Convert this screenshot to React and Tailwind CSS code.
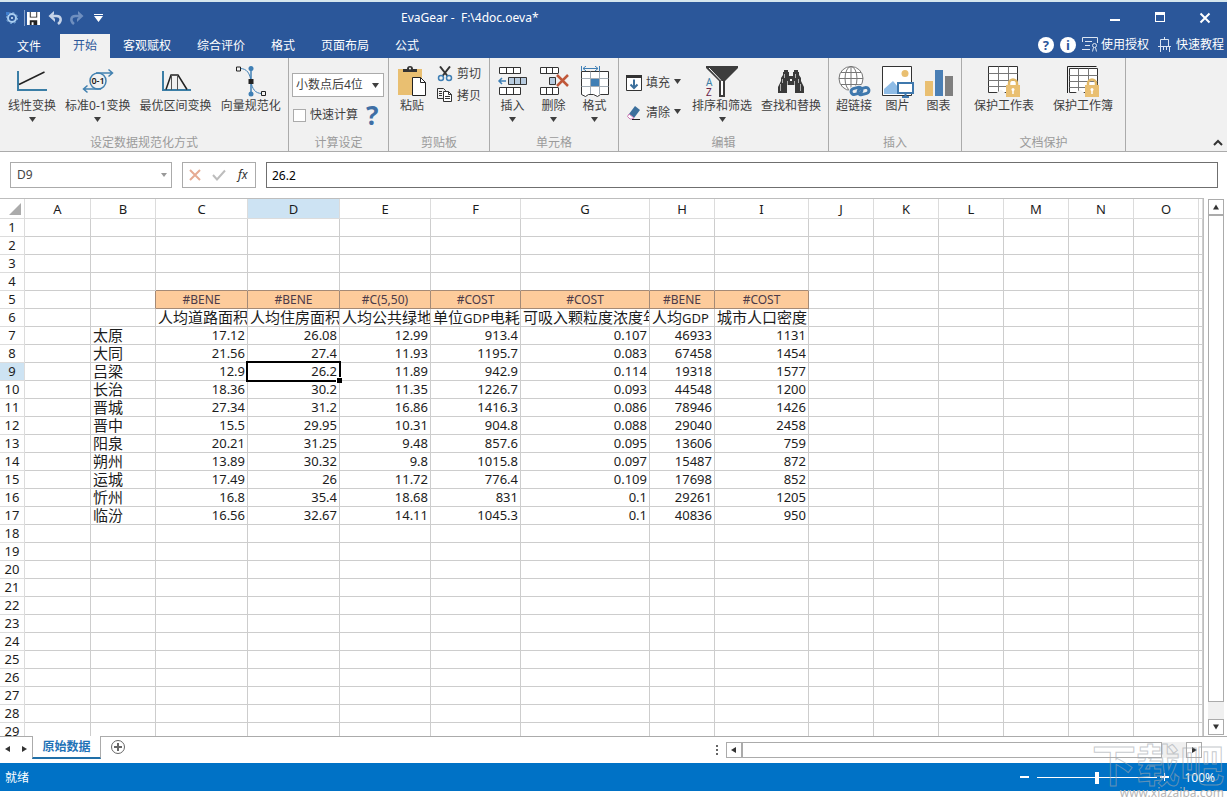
const UI_FONT = "font-['Noto_Sans','Noto_Sans_CJK_SC',sans-serif]"

const DECIMALS = ['小数点后0位', '小数点后2位', '小数点后4位', '小数点后6位']

// The last column has no width: it takes whatever space is left
const COLUMNS = [
  { id: 'A', width: 66 },
  { id: 'B', width: 65 },
  { id: 'C', width: 92 },
  { id: 'D', width: 92 },
  { id: 'E', width: 91 },
  { id: 'F', width: 90 },
  { id: 'G', width: 129 },
  { id: 'H', width: 65 },
  { id: 'I', width: 94 },
  { id: 'J', width: 65 },
  { id: 'K', width: 65 },
  { id: 'L', width: 65 },
  { id: 'M', width: 65 },
  { id: 'N', width: 65 },
  { id: 'O', width: 65 },
  { id: '' }
]

const ROW_COUNT = 29
const ACTIVE = { col: 'D', row: 9 }

const TYPES = ['#BENE', '#BENE', '#C(5,50)', '#COST', '#COST', '#BENE', '#COST']
const LABELS = ['人均道路面积', '人均住房面积', '人均公共绿地', '单位GDP电耗', '可吸入颗粒度浓度年均值', '人均GDP', '城市人口密度']

const CITIES = [
  ['太原', '17.12', '26.08', '12.99', '913.4', '0.107', '46933', '1131'],
  ['大同', '21.56', '27.4', '11.93', '1195.7', '0.083', '67458', '1454'],
  ['吕梁', '12.9', '26.2', '11.89', '942.9', '0.114', '19318', '1577'],
  ['长治', '18.36', '30.2', '11.35', '1226.7', '0.093', '44548', '1200'],
  ['晋城', '27.34', '31.2', '16.86', '1416.3', '0.086', '78946', '1426'],
  ['晋中', '15.5', '29.95', '10.31', '904.8', '0.088', '29040', '2458'],
  ['阳泉', '20.21', '31.25', '9.48', '857.6', '0.095', '13606', '759'],
  ['朔州', '13.89', '30.32', '9.8', '1015.8', '0.097', '15487', '872'],
  ['运城', '17.49', '26', '11.72', '776.4', '0.109', '17698', '852'],
  ['忻州', '16.8', '35.4', '18.68', '831', '0.1', '29261', '1205'],
  ['临汾', '16.56', '32.67', '14.11', '1045.3', '0.1', '40836', '950']
]

// Returns { kind, text } for a cell, or null when it is empty
function getCell(row, colIndex) {
  if (row === 5 && colIndex >= 2 && colIndex <= 8) return { kind: 'type', text: TYPES[colIndex - 2] }
  if (row === 6 && colIndex >= 2 && colIndex <= 8) return { kind: 'label', text: LABELS[colIndex - 2] }
  const city = CITIES[row - 7]
  if (city && colIndex >= 1 && colIndex <= 8) {
    return { kind: colIndex === 1 ? 'label' : 'number', text: city[colIndex - 1] }
  }
  return null
}

/* ---------- icons ---------- */

function Caret({ className = '' }) {
  return (
    <svg className={className} width="7" height="5" viewBox="0 0 7 5" aria-hidden="true">
      <path d="M0 0h7L3.500 5z" fill="currentColor" />
    </svg>
  )
}

function LinearIcon() {
  return (
    <svg width="32" height="32" viewBox="0 0 32 32" fill="none">
      <path d="M2 5v19h29" stroke="#3b7ea6" strokeWidth="2" />
      <path d="M3 18.500 28.500 6" stroke="#222" strokeWidth="1.500" />
    </svg>
  )
}

function ZeroOneIcon() {
  return (
    <svg width="32" height="32" viewBox="0 0 32 32" fill="none">
      <g stroke="#4281b0" strokeWidth="1.500">
        <circle cx="16" cy="15" r="8" />
        <path d="M14 7h16M26.500 3.500l4 3.500-4 3.500M19 23H2M5.500 19.500 1.500 23l4 3.500" />
      </g>
      <text x="16" y="18" textAnchor="middle" fontSize="9" fontWeight="600" fill="#222">0-1</text>
    </svg>
  )
}

function IntervalIcon() {
  return (
    <svg width="32" height="32" viewBox="0 0 32 32" fill="none">
      <path d="M3 5v19h28" stroke="#3b7ea6" strokeWidth="2" />
      <path d="M6 23.500 11 9h7l9 14.500" stroke="#222" strokeWidth="1.500" />
      <path d="M11.500 9v15M17.500 9v15" stroke="#555" />
    </svg>
  )
}

function VectorIcon() {
  return (
    <svg width="32" height="32" viewBox="0 0 32 32" fill="none">
      <path d="M16 2v27" stroke="#3f7fb5" strokeWidth="1.500" />
      <path d="M5 2.500c7 0 10 5 11 13 1 7 4 12 11 12" stroke="#3f7fb5" />
      <circle cx="16" cy="2.500" r="2.500" fill="#3f7fb5" />
      <circle cx="16" cy="28" r="2.500" fill="#3f7fb5" />
      <path d="M13.500 13h5v5h-5z" fill="#222" />
      <path d="M1.500 1h4v4h-4zM26.500 25.500h4v4h-4z" fill="#f1f1f1" stroke="#222" />
    </svg>
  )
}

function PasteIcon() {
  return (
    <svg width="32" height="32" viewBox="0 0 32 32" fill="none">
      <path d="M2 3h24v26H2z" fill="#e9bf71" />
      <path d="M7 6V3h4a3 3 0 0 1 6 0h4v3z" fill="#333" />
      <circle cx="14" cy="2.500" r="1" fill="#fff" />
      <path d="M16.500 11.500h8l5 5v13h-13z" fill="#fff" stroke="#222" />
      <path d="M24.500 11.500v5h5" stroke="#222" />
    </svg>
  )
}

function CutIcon() {
  return (
    <svg width="16" height="16" viewBox="0 0 16 16" fill="none">
      <path d="M3 .5 10.500 10M13 .5 5.500 10" stroke="#333" strokeWidth="2" />
      <circle cx="4" cy="12" r="2.500" stroke="#3f7fb5" strokeWidth="1.500" />
      <circle cx="12" cy="12" r="2.500" stroke="#3f7fb5" strokeWidth="1.500" />
    </svg>
  )
}

function CopyIcon() {
  return (
    <svg width="16" height="16" viewBox="0 0 16 16" fill="none" stroke="#333">
      <path d="M.5.500h6l2 2v8h-8zM2 3.500h3M2 5.500h3M2 7.500h3" />
      <path d="M6.500 3.500h5l3 3v7h-8z" fill="#fff" />
      <path d="M11.500 3.500v3h3M8 8.500h5M8 10.500h5" />
    </svg>
  )
}

function InsertIcon() {
  return (
    <svg width="32" height="32" viewBox="0 0 32 32" fill="none" stroke="#333">
      <path d="M2.500 1.500h21v6h-21zM9.500 1.500v6M16.500 1.500v6M2.500 21.500h21v7h-21zM9.500 21.500v7M16.500 21.500v7" fill="#fff" />
      <path d="M11.500 11.500h18v7h-18zM17.500 11.500v7M23.500 11.500v7" fill="#b7cbdf" />
      <path d="M9 15H2M5 12l-3 3 3 3" stroke="#3f7fb5" strokeWidth="1.500" />
    </svg>
  )
}

function DeleteIcon() {
  return (
    <svg width="32" height="32" viewBox="0 0 32 32" fill="none" stroke="#333">
      <path d="M20 1.500H2.500v6H20M8.500 1.500v6M14.500 1.500v6M20.500 1.500v6M20 21.500H2.500v7H20M8.500 21.500v7M14.500 21.500v7M20.500 21.500v7" fill="#fff" />
      <path d="M11.500 11.500h6v7h-6z" fill="#b7cbdf" />
      <path d="m19 9 11 11M30 9 19 20" stroke="#c0583a" strokeWidth="2.500" />
    </svg>
  )
}

function FormatIcon() {
  return (
    <svg width="32" height="32" viewBox="0 0 32 32" fill="none">
      <path d="M2.500 5.500h27v23h-8l-3 2-4-2h-5l-3 2-4-2z" fill="#fff" stroke="#333" />
      <path d="M2.500 12.500h27M2.500 20.500h27M11.500 5.500V28M20.500 5.500V28" stroke="#a3adb6" />
      <path d="M12 13h8v7h-8z" fill="#3f7fb5" />
      <path d="M2.500 0v5M20.500 0v5M4 2.500h15M7 0 4 2.500 7 5M16 0l3 2.500L16 5" stroke="#3f7fb5" />
    </svg>
  )
}

function FillIcon() {
  return (
    <svg width="16" height="16" viewBox="0 0 16 16" fill="none">
      <path d="M.5.500h15v15H.5z" fill="#fff" stroke="#333" />
      <path d="M0 0h16v3H0z" fill="#333" />
      <path d="M8 4.500V13M4.500 9.500 8 13l3.500-3.500" stroke="#3b6f9c" strokeWidth="2" />
    </svg>
  )
}

function EraseIcon() {
  return (
    <svg width="16" height="16" viewBox="0 0 16 16" fill="none">
      <path d="m9 1 5 4-6 8-5-4z" fill="#3b6f9c" />
      <path d="m3 9 5 4-2 1H4l-2.500-2.500z" fill="#fff" stroke="#c978b4" />
      <path d="M6 14.500h8" stroke="#222" />
    </svg>
  )
}

function SortFilterIcon() {
  return (
    <svg width="34" height="32" viewBox="0 0 34 32">
      <path d="M1 0h32v2L20 15v16h-6V15L1 2z" fill="#3d3d3d" />
      <path d="M16 15h2v14h-2z" fill="#fff" />
      <path d="m4 2 12 12.500" stroke="#fff" />
      <text x="1" y="20" fontSize="10" fill="#3b7ea6">A</text>
      <text x="1" y="30" fontSize="10" fill="#6b2346">Z</text>
    </svg>
  )
}

function BinocularsIcon() {
  return (
    <svg width="32" height="32" viewBox="0 0 32 32" fill="#3a3a3a">
      <path d="M9 4h4v2h1v4h4V6h1V4h4v2h1v3l2 3v3l3 6v6h-9v-8h-8v8H3v-6l3-6v-3l2-3V6h1z" />
      <path d="M9.500 8v4M7.500 13v4M5.500 18v7M20.500 8v4M23.500 13v4M25.500 18v7M12.500 15v4M19.500 15v4" stroke="#f1f1f1" strokeWidth="1" opacity=".65" />
      <path d="M15 13h2v2h-2z" fill="#f1f1f1" />
    </svg>
  )
}

function HyperlinkIcon() {
  return (
    <svg width="34" height="32" viewBox="0 0 34 32" fill="none">
      <g stroke="#777">
        <circle cx="14" cy="12.500" r="12" fill="#fff" />
        <ellipse cx="14" cy="12.500" rx="6" ry="12" />
        <path d="M14 .5v24M2 12.500h24M4 6.500h20M4 18.500h20" />
      </g>
      <g stroke="#f1f1f1" strokeWidth="5">
        <rect x="14" y="22" width="11" height="6" rx="3" transform="rotate(-15 19 25)" />
        <rect x="21" y="22" width="11" height="6" rx="3" transform="rotate(-15 27 25)" />
      </g>
      <g stroke="#3f78ad" strokeWidth="3">
        <rect x="14" y="22" width="11" height="6" rx="3" transform="rotate(-15 19 25)" />
        <rect x="21" y="22" width="11" height="6" rx="3" transform="rotate(-15 27 25)" />
      </g>
    </svg>
  )
}

function PictureIcon() {
  return (
    <svg width="34" height="32" viewBox="0 0 34 32" fill="none">
      <path d="M1.500.500h29v29h-29z" fill="#fff" stroke="#333" />
      <circle cx="24" cy="7.500" r="3.500" fill="#e9bf71" />
      <path d="M3 28v-5l9-8 5 6v7z" fill="#8fbce6" />
      <path d="M17 17h15v10H17z" fill="#fff" stroke="#3f78ad" strokeWidth="2" />
      <path d="M21 31h7M24.500 27v4" stroke="#3f78ad" strokeWidth="2" />
    </svg>
  )
}

function ChartIcon() {
  return (
    <svg width="32" height="32" viewBox="0 0 32 32">
      <path d="M2 15h8v15H2z" fill="#e9bf71" />
      <path d="M12 4h8v26h-8z" fill="#4a7fb5" />
      <path d="M22 10h8v20h-8z" fill="#7f7f7f" />
    </svg>
  )
}

function ProtectIcon({ book }) {
  return (
    <svg width="34" height="32" viewBox="0 0 34 32" fill="none">
      {book && <path d="M1.500 27V.5h29" stroke="#222" />}
      <path d={book ? 'M3.500 2.500h28v24h-28z' : 'M1.500.500h29v26h-29z'} fill="#fff" stroke="#333" />
      <path
        d={book ? 'M3.500 9.500h28M3.500 15.500h28M3.500 21.500h28M12.500 2.500v24M22.500 2.500v24' : 'M1.500 7.500h29M1.500 14.500h29M1.500 20.500h29M11.500.500v26M21.500.500v26'}
        stroke="#777"
      />
      <path d="m9 27.500 5-4 5 4z" fill="#f1f1f1" />
      <path d="M22 20v-2.500a4 4 0 0 1 8 0V20" stroke="#e2b866" strokeWidth="2.500" />
      <path d="M19 19h14v12H19z" fill="#e9bf71" />
      <circle cx="26" cy="23.500" r="1.500" fill="#fff" />
      <path d="M26 24v4" stroke="#fff" strokeWidth="1.500" />
    </svg>
  )
}

/* ---------- title bar and tabs ---------- */

function TitleBar() {
  return (
    <header className="flex h-8 shrink-0 items-center bg-[#2b579a] text-white">
      <div className="flex w-[401px] items-center">
        <svg className="ml-[5px]" width="14" height="14" viewBox="0 0 14 14" fill="none">
          <circle cx="7" cy="7" r="4" stroke="#a9cdf0" strokeWidth="2" />
          <circle cx="7" cy="7" r="5.500" stroke="#7fb0e0" strokeDasharray="2 2.300" />
          <circle cx="7" cy="7" r="1" fill="#d9ecff" />
          <path d="M1 1h3v3H1z" fill="#3f7fd0" />
        </svg>
        <span className="ml-[5px] h-4 w-px bg-[#8aa4cb]" />
        <button type="button" aria-label="保存" className="ml-[2px]">
          <svg width="13" height="13" viewBox="0 0 14 14">
            <path d="M0 0h14v14H0z" fill="#fff" />
            <path d="M3 0h8v6H3zM3 9h8v5H3z" fill="#222" />
            <path d="M4 0h6v5H4zM5 11h2v3H5z" fill="#fff" />
          </svg>
        </button>
        <button type="button" aria-label="撤销" className="ml-2">
          <svg width="15" height="14" viewBox="0 0 15 14" fill="none">
            <path d="M3 5h5.500c5 0 5.500 5 1.500 8" stroke="#c5d3e8" strokeWidth="2.500" />
            <path d="M6 0v3L4.500 5 7 8v3L.5 5z" fill="#c5d3e8" />
          </svg>
        </button>
        <button type="button" aria-label="重做" className="ml-[6px]">
          <svg width="15" height="14" viewBox="0 0 15 14" fill="none">
            <path d="M12 5H6.500C1.500 5 1 10 5 13" stroke="#6f8fbf" strokeWidth="2.500" />
            <path d="M9 0v3l1.500 2L8 8v3l6.500-6z" fill="#6f8fbf" />
          </svg>
        </button>
        <button type="button" aria-label="自定义" className="ml-[10px]">
          <svg width="9" height="9" viewBox="0 0 9 9" fill="#fff">
            <path d="M0 0h9v1H0zM0 2h9L4.500 8z" />
          </svg>
        </button>
      </div>
      <h1 className="whitespace-pre text-[12px]">EvaGear -  F:\4doc.oeva*</h1>
      <div className="ml-auto flex items-center pr-4">
        <button type="button" aria-label="最小化">
          <svg width="12" height="12" viewBox="0 0 12 12"><path d="M1 7h10v2H1z" fill="#fff" /></svg>
        </button>
        <button type="button" aria-label="最大化" className="ml-[33px]">
          <svg width="12" height="12" viewBox="0 0 12 12" fill="#fff" fillRule="evenodd"><path d="M1 0h10v10H1zM2 3v6h8V3z" /></svg>
        </button>
        <button type="button" aria-label="关闭" className="ml-[33px]">
          <svg width="12" height="12" viewBox="0 0 12 12"><path d="m1.500 1.500 9 9M10.500 1.500l-9 9" stroke="#fff" strokeWidth="2" /></svg>
        </button>
      </div>
    </header>
  )
}

function TabBar() {
  const tabs = ['开始', '客观赋权', '综合评价', '格式', '页面布局', '公式']
  return (
    <nav className="flex h-6 shrink-0 bg-[#2b579a] text-[12px] text-white">
      <button type="button" className="w-[60px] pr-[2px] pt-px">文件</button>
      {tabs.map((tab, i) => (
        <button key={tab} type="button" className={i === 0 ? 'bg-[#f1f1f1] px-[13px] text-[#2b579a]' : 'px-[13px]'}>
          {tab}
        </button>
      ))}
      <div className="ml-auto flex items-center gap-[6px] pr-[3px] pb-[2px]">
        <button type="button" aria-label="帮助" className="size-4 rounded-full bg-white text-center text-[13px] leading-4 font-bold text-[#2b579a]">?</button>
        <button type="button" aria-label="关于" className="size-4 rounded-full bg-white text-center text-[13px] leading-4 font-bold text-[#2b579a]">i</button>
        <button type="button" className="flex items-center gap-[3px]">
          <svg width="16" height="16" viewBox="0 0 16 16" fill="none" stroke="#dbe5f3">
            <path d="M8 12.500H0M.5.500h15V6M.5.500V5M3 4.500h7M3 8.500h5" />
            <circle cx="12.500" cy="8.500" r="2" />
            <path d="m11.500 10.500-1 4M13.500 10.500l1 4" />
          </svg>
          使用授权
        </button>
        <button type="button" className="ml-[2px] flex items-center gap-[3px]">
          <svg width="16" height="16" viewBox="0 0 16 16" fill="none" stroke="#dbe5f3">
            <path d="M7.500 0v3M3.500 9.500v-7h8v7M1 9.500h13M3.500 10v5M6.500 10v3M9.500 10v3M12.500 10v5" />
          </svg>
          快速教程
        </button>
      </div>
    </nav>
  )
}

/* ---------- ribbon ---------- */

function RibbonGroup({ title, width, className = '', children }) {
  return (
    <section className={`flex shrink-0 flex-col border-r border-[#ababab] ${width}`}>
      <div className={`flex flex-1 items-start pt-2 ${className}`}>{children}</div>
      <h2 className="text-center text-[12px] leading-4 text-[#9b9b9b]">{title}</h2>
    </section>
  )
}

function BigButton({ icon, label, menu, className = '' }) {
  return (
    <button type="button" className={`flex shrink-0 flex-col items-center whitespace-nowrap ${className}`}>
      <span className="flex h-8 justify-center">{icon}</span>
      <span className="leading-4">{label}</span>
      {menu && <Caret className="mt-[3px]" />}
    </button>
  )
}

function SmallButton({ icon, label, menu }) {
  return (
    <button type="button" className="flex items-center gap-1 leading-4 whitespace-nowrap">
      {icon}
      {label}
      {menu && <Caret className="mb-1" />}
    </button>
  )
}

function Ribbon() {
  return (
    <div className="flex h-[94px] shrink-0 overflow-hidden border-b border-[#ababab] bg-[#f1f1f1] text-[12px] text-[#3f3f3f]">
      <RibbonGroup title="设定数据规范化方式" width="w-[289px]" className="gap-[9px] pl-2">
        <BigButton icon={<LinearIcon />} label="线性变换" menu />
        <BigButton icon={<ZeroOneIcon />} label="标准0-1变换" menu />
        <BigButton icon={<IntervalIcon />} label="最优区间变换" />
        <BigButton icon={<VectorIcon />} label="向量规范化" />
      </RibbonGroup>

      <RibbonGroup title="计算设定" width="w-[100px]" className="pl-[3px]">
        <div className="flex flex-col gap-1 pt-[7px]">
          <div className="relative">
            <select aria-label="小数位数" defaultValue="小数点后4位" className="h-6 w-[92px] appearance-none border border-[#ababab] bg-white pl-[3px]">
              {DECIMALS.map((d) => <option key={d}>{d}</option>)}
            </select>
            <Caret className="pointer-events-none absolute top-[10px] right-[5px]" />
          </div>
          <div className="flex items-center">
            <label className="flex items-center gap-1 pl-px">
              <input type="checkbox" className="size-[13px] appearance-none border border-[#ababab] bg-white" />
              快速计算
            </label>
            <button type="button" aria-label="帮助" className="ml-2 text-[26px] leading-7 font-bold text-[#3f6fa5]">?</button>
          </div>
        </div>
      </RibbonGroup>

      <RibbonGroup title="剪贴板" width="w-[101px]" className="gap-[9px] pl-[7px]">
        <BigButton icon={<PasteIcon />} label="粘贴" />
        <div className="flex flex-col gap-[6px]">
          <SmallButton icon={<CutIcon />} label="剪切" />
          <SmallButton icon={<CopyIcon />} label="拷贝" />
        </div>
      </RibbonGroup>

      <RibbonGroup title="单元格" width="w-[129px]" className="pl-[2px]">
        <BigButton icon={<InsertIcon />} label="插入" menu className="w-[41px]" />
        <BigButton icon={<DeleteIcon />} label="删除" menu className="w-[41px]" />
        <BigButton icon={<FormatIcon />} label="格式" menu className="w-[41px]" />
      </RibbonGroup>

      <RibbonGroup title="编辑" width="w-[210px]" className="pl-[7px]">
        <div className="flex flex-col gap-[14px] pt-[9px]">
          <SmallButton icon={<FillIcon />} label="填充" menu />
          <SmallButton icon={<EraseIcon />} label="清除" menu />
        </div>
        <BigButton icon={<SortFilterIcon />} label="排序和筛选" menu className="ml-[11px]" />
        <BigButton icon={<BinocularsIcon />} label="查找和替换" className="ml-[9px]" />
      </RibbonGroup>

      <RibbonGroup title="插入" width="w-[133px]" className="pl-[5px]">
        <BigButton icon={<HyperlinkIcon />} label="超链接" className="w-10" />
        <BigButton icon={<PictureIcon />} label="图片" className="ml-[3px] w-[41px]" />
        <BigButton icon={<ChartIcon />} label="图表" className="w-[41px]" />
      </RibbonGroup>

      <RibbonGroup title="文档保护" width="w-[164px]" className="gap-[19px] pl-3">
        <BigButton icon={<ProtectIcon />} label="保护工作表" />
        <BigButton icon={<ProtectIcon book />} label="保护工作簿" />
      </RibbonGroup>

      <button type="button" aria-label="折叠功能区" className="mt-auto ml-auto p-1">
        <svg width="10" height="8" viewBox="0 0 10 8" fill="none">
          <path d="m1 6 4-4 4 4" stroke="#333" strokeWidth="2" />
        </svg>
      </button>
    </div>
  )
}

/* ---------- formula bar ---------- */

function FormulaBar() {
  return (
    <div className="flex h-[46px] shrink-0 items-center gap-[10px] pr-[9px] pl-[10px] text-[12px]">
      <div className="flex h-[26px] w-[162px] items-center border border-[#ababab] pr-1">
        <input aria-label="名称框" defaultValue="D9" className="min-w-0 flex-1 pl-[6px] text-[#444] outline-none" />
        <svg width="6" height="4" viewBox="0 0 6 4"><path d="M0 0h6L3 4z" fill="#999" /></svg>
      </div>
      <div className="flex h-[26px] w-[74px] items-center border border-[#ababab] pl-[6px]">
        <button type="button" aria-label="取消">
          <svg width="12" height="12" viewBox="0 0 12 12"><path d="m1 1 10 10M11 1 1 11" stroke="#e6ab93" strokeWidth="2" /></svg>
        </button>
        <button type="button" aria-label="确认" className="ml-[11px]">
          <svg width="14" height="12" viewBox="0 0 14 12" fill="none"><path d="m1 6 4 4.500L13 1.500" stroke="#bdbdbd" strokeWidth="2" /></svg>
        </button>
        <button type="button" className="ml-3 text-[12px] text-[#333] italic">fx</button>
      </div>
      <input aria-label="编辑栏" defaultValue="26.2" className="h-[26px] min-w-0 flex-1 border border-[#6f6f6f] pl-[5px] text-[12px] outline-none" />
    </div>
  )
}

/* ---------- grid ---------- */

// Latin runs inside Chinese labels are set one step smaller
function MixedText({ text }) {
  return text.split(/([A-Za-z]+)/).map((part, i) => (
    <span key={i} className={i % 2 ? 'text-[13px]' : undefined}>{part}</span>
  ))
}

const CELL_STYLES = {
  type: 'border-[#a58a76] bg-[#fdcb9b] text-center text-[12px] text-[#4b3a48]',
  label: 'border-[#cdcdcd] pl-[2px] text-[15px]',
  number: 'border-[#cdcdcd] pr-[2px] text-right text-[13px]',
  empty: 'border-[#cdcdcd]'
}

function Cell({ row, colIndex }) {
  const cell = getCell(row, colIndex)
  const active = row === ACTIVE.row && COLUMNS[colIndex].id === ACTIVE.col
  const aboveType = row === 4 && colIndex >= 2 && colIndex <= 8
  const beforeType = row === 5 && colIndex === 1
  return (
    <td className={`relative h-[18px] border-r border-b p-0 ${CELL_STYLES[cell ? cell.kind : 'empty']} ${aboveType ? 'border-b-[#a58a76]' : ''} ${beforeType ? 'border-r-[#a58a76]' : ''}`}>
      <div className="h-[17px] overflow-hidden leading-[17px] whitespace-nowrap">
        {cell && (cell.kind === 'label' ? <MixedText text={cell.text} /> : cell.text)}
      </div>
      {active && (
        <span className="absolute -top-[2px] -right-[2px] -bottom-[2px] -left-[2px] z-10 border-2 border-black">
          <span className="absolute -right-[3px] -bottom-[3px] size-[6px] border-t border-l border-white bg-black" />
        </span>
      )}
    </td>
  )
}

function Sheet() {
  const rows = Array.from({ length: ROW_COUNT }, (_, i) => i + 1)
  return (
    <div className="min-w-0 flex-1 overflow-hidden border-t border-r border-[#bdbdbd]">
      <table className="w-full table-fixed border-separate border-spacing-0 text-[13px] text-[#1c1c1c]">
        <colgroup>
          <col className="w-[25px]" />
          {COLUMNS.map((c) => <col key={c.id} style={{ width: c.width }} />)}
        </colgroup>
        <thead>
          <tr>
            <th aria-label="全选" className="h-5 border-r border-b border-[#dcdcdc] p-0">
              <svg className="ml-auto mr-[3px]" width="12" height="12" viewBox="0 0 12 12"><path d="M12 0v12H0z" fill="#ababab" /></svg>
            </th>
            {COLUMNS.map((c) => (
              <th
                key={c.id}
                className={`h-5 border-r border-b border-[#dcdcdc] p-0 leading-[18px] font-normal ${c.id === ACTIVE.col ? 'bg-[#cde3f3]' : ''}`}
              >
                {c.id}
              </th>
            ))}
          </tr>
        </thead>
        <tbody>
          {rows.map((row) => (
            <tr key={row}>
              <th className={`h-[18px] border-r border-b border-[#dcdcdc] p-0 leading-[17px] font-normal ${row === ACTIVE.row ? 'bg-[#cde3f3]' : ''}`}>
                {row}
              </th>
              {COLUMNS.map((c, i) => <Cell key={c.id} row={row} colIndex={i} />)}
            </tr>
          ))}
        </tbody>
      </table>
    </div>
  )
}

function ArrowButton({ label, path, className = '' }) {
  return (
    <button type="button" aria-label={label} className={`flex size-4 shrink-0 items-center justify-center ${className}`}>
      <svg width="6" height="6" viewBox="0 0 6 6"><path d={path} fill="#333" /></svg>
    </button>
  )
}

const ARROWS = {
  up: 'M0 5.500h6L3 .5z',
  down: 'M0 .5h6L3 5.500z',
  left: 'M5 0v6L0 3z',
  right: 'M1 0v6l5-3z'
}

function VerticalScroll() {
  return (
    <div className="flex w-[23px] shrink-0 flex-col py-px pl-1">
      <ArrowButton label="向上滚动" path={ARROWS.up} className="border border-[#ababab]" />
      <div className="w-4 flex-1 bg-[#f0f0f0] pb-[17px]">
        <div className="h-full border border-[#ababab] bg-white" />
      </div>
      <ArrowButton label="向下滚动" path={ARROWS.down} className="border border-[#ababab]" />
    </div>
  )
}

/* ---------- bottom bars ---------- */

function SheetTabs() {
  return (
    <div className="flex h-[27px] shrink-0 items-start border-t border-[#ababab]">
      <ArrowButton label="上一个工作表" path={ARROWS.left} className="mt-1" />
      <ArrowButton label="下一个工作表" path={ARROWS.right} className="mt-1" />
      <button type="button" className="-mt-px h-[23px] w-[69px] border-x border-b-2 border-x-[#ababab] border-b-[#1f6fa8] bg-white text-[12px] font-bold text-[#1f73b7]">
        原始数据
      </button>
      <button type="button" aria-label="新建工作表" className="mt-[3px] ml-[10px]">
        <svg width="14" height="14" viewBox="0 0 14 14" fill="none" stroke="#666">
          <circle cx="7" cy="7" r="6.500" />
          <path d="M7 3v8M3 7h8" strokeWidth="2" />
        </svg>
      </button>
      <div className="mt-[5px] mr-[25px] ml-auto flex w-[486px] items-center">
        <svg width="2" height="12" viewBox="0 0 2 12"><path d="M0 1h2v2H0zM0 5h2v2H0zM0 9h2v2H0z" fill="#666" /></svg>
        <ArrowButton label="向左滚动" path={ARROWS.left} className="ml-2 border border-[#ababab]" />
        <div className="h-4 flex-1 bg-[#f0f0f0] pr-6">
          <div className="h-full border border-[#ababab] bg-white" />
        </div>
        <ArrowButton label="向右滚动" path={ARROWS.right} className="border border-[#ababab]" />
      </div>
    </div>
  )
}

function StatusBar() {
  return (
    <footer className="flex h-7 shrink-0 items-center bg-[#0072c6] pt-px pr-3 pl-[5px] text-[12px] text-white">
      <span>就绪</span>
      <button type="button" aria-label="缩小" className="ml-auto">
        <svg width="9" height="9" viewBox="0 0 9 9"><path d="M0 3h9v2H0z" fill="#fff" /></svg>
      </button>
      <input
        type="range"
        aria-label="缩放"
        min="0"
        max="200"
        defaultValue="100"
        className="mr-[3px] ml-2 h-3 w-[120px] appearance-none bg-[linear-gradient(#fff,#fff)] bg-[length:100%_1px] bg-center bg-no-repeat [&::-webkit-slider-thumb]:h-3 [&::-webkit-slider-thumb]:w-1 [&::-webkit-slider-thumb]:appearance-none [&::-webkit-slider-thumb]:bg-white"
      />
      <button type="button" aria-label="放大">
        <svg width="9" height="9" viewBox="0 0 9 9"><path d="M0 3h9v2H0zM4 0h1v8H4z" fill="#fff" /></svg>
      </button>
      <span className="ml-[15px]">100%</span>
    </footer>
  )
}

function Watermark() {
  return (
    <div className="pointer-events-none absolute right-[3px] bottom-0 flex flex-col items-end whitespace-nowrap text-transparent">
      <span className="text-[44px] leading-[46px] font-bold [-webkit-text-stroke:1px_#a0a6ac99]">下载吧</span>
      <span className="text-[12px] leading-[10px] text-[#b5b5b5]">www.xiazaiba.com</span>
    </div>
  )
}

export default function App() {
  return (
    <div className={`relative flex h-screen flex-col overflow-hidden border-t-2 border-[#d5e6ee] bg-white pb-[7px] ${UI_FONT}`}>
      <TitleBar />
      <TabBar />
      <Ribbon />
      <FormulaBar />
      <main className="flex min-h-0 flex-1">
        <Sheet />
        <VerticalScroll />
      </main>
      <SheetTabs />
      <StatusBar />
      <Watermark />
    </div>
  )
}
